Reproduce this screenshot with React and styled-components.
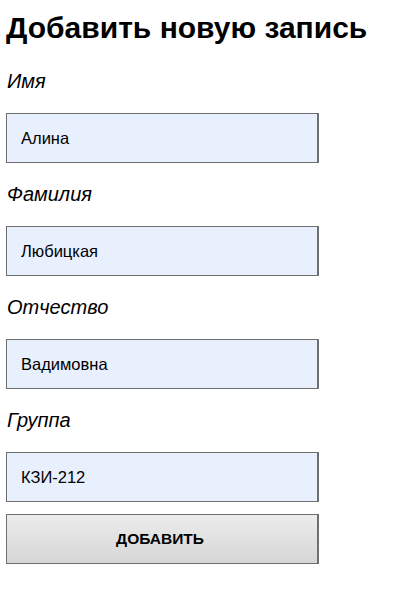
import React from "react";
import styled, { createGlobalStyle } from "styled-components";

const Global = createGlobalStyle`
  html, body { margin: 0; padding: 0; background: #fff; }
  body { font-family: "Liberation Sans", Arial, sans-serif; color: #000; }
`;

const Page = styled.form`
  display: flex;
  flex-direction: column;
  padding: 11px 6px 0 6px;
  width: 313px;
`;

const Title = styled.h1`
  margin: 0;
  font-size: 30px;
  font-weight: bold;
  line-height: 34px;
  white-space: nowrap;
`;

const Label = styled.label`
  display: block;
  font-style: italic;
  font-size: 20px;
  line-height: 23px;
  margin: ${(p) => (p.$first ? "25px" : "20px")} 1px 20px;
`;

const Field = styled.input`
  box-sizing: border-box;
  width: 313px;
  height: 50px;
  margin: 0;
  padding: 0 14px;
  border: 1px solid #6f6f6f;
  border-right-width: 2px;
  background: #e8f0fe;
  font-family: "Liberation Sans", Arial, sans-serif;
  font-size: 16.5px;
  color: #000;
  outline: none;
`;

const Button = styled.button`
  box-sizing: border-box;
  width: 313px;
  height: 50px;
  margin-top: 12px;
  border: 1px solid #6f6f6f;
  border-right-width: 2px;
  background: linear-gradient(#ececec, #d6d6d6);
  font-family: "Liberation Sans", Arial, sans-serif;
  font-weight: bold;
  font-size: 15.5px;
  color: #000;
  padding: 0 4px 0 0;
  cursor: pointer;
`;

const fields = [
  { label: "Имя", value: "Алина" },
  { label: "Фамилия", value: "Любицкая" },
  { label: "Отчество", value: "Вадимовна" },
  { label: "Группа", value: "КЗИ-212" },
];

export default function App() {
  return (
    <>
      <Global />
      <Page onSubmit={(e) => e.preventDefault()}>
        <Title>Добавить новую запись</Title>
        {fields.map((f, i) => (
          <React.Fragment key={f.label}>
            <Label $first={i === 0}>{f.label}</Label>
            <Field defaultValue={f.value} />
          </React.Fragment>
        ))}
        <Button type="submit">ДОБАВИТЬ</Button>
      </Page>
    </>
  );
}
